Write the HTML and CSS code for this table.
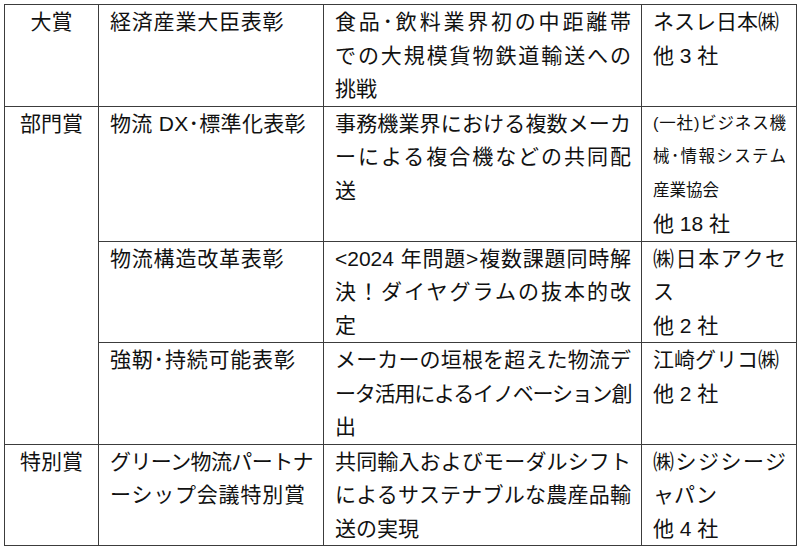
FILE: index.html
```html
<!DOCTYPE html>
<html lang="ja">
<head>
<meta charset="utf-8">
<title>表彰一覧</title>
<link rel="stylesheet" href="styles.css">
</head>
<body>
<table class="awards">
  <colgroup>
    <col class="c1">
    <col class="c2">
    <col class="c3">
    <col class="c4">
  </colgroup>
  <tbody>
    <tr>
      <td class="cat">大賞</td>
      <td class="name">経済産業大臣表彰</td>
      <td class="desc">
        <span class="ln j">食品･飲料業界初の中距離帯</span>
        <span class="ln j">での大規模貨物鉄道輸送への</span>
        <span class="ln">挑戦</span>
      </td>
      <td class="co">
        <span class="ln">ネスレ日本㈱</span>
        <span class="ln">他 3 社</span>
      </td>
    </tr>
    <tr>
      <td class="cat" rowspan="3">部門賞</td>
      <td class="name"><span class="tight">物流 DX･標準化表彰</span></td>
      <td class="desc">
        <span class="ln j">事務機業界における複数メーカ</span>
        <span class="ln j">ーによる複合機などの共同配</span>
        <span class="ln">送</span>
      </td>
      <td class="co">
        <span class="ln j small">(一社)ビジネス機</span>
        <span class="ln j small">械･情報システム</span>
        <span class="ln small">産業協会</span>
        <span class="ln">他 18 社</span>
      </td>
    </tr>
    <tr>
      <td class="name">物流構造改革表彰</td>
      <td class="desc">
        <span class="ln j">&lt;2024 年問題&gt;複数課題同時解</span>
        <span class="ln j">決！ダイヤグラムの抜本的改</span>
        <span class="ln">定</span>
      </td>
      <td class="co">
        <span class="ln j">㈱日本アクセ</span>
        <span class="ln">ス</span>
        <span class="ln">他 2 社</span>
      </td>
    </tr>
    <tr>
      <td class="name">強靭･持続可能表彰</td>
      <td class="desc">
        <span class="ln j">メーカーの垣根を超えた物流デ</span>
        <span class="ln j squeeze">ータ活用によるイノベーション創</span>
        <span class="ln">出</span>
      </td>
      <td class="co">
        <span class="ln">江崎グリコ㈱</span>
        <span class="ln">他 2 社</span>
      </td>
    </tr>
    <tr>
      <td class="cat">特別賞</td>
      <td class="name">
        <span class="ln narrow">グリーン物流パートナ</span>
        <span class="ln">ーシップ会議特別賞</span>
      </td>
      <td class="desc">
        <span class="ln j">共同輸入およびモーダルシフト</span>
        <span class="ln j">によるサステナブルな農産品輸</span>
        <span class="ln">送の実現</span>
      </td>
      <td class="co">
        <span class="ln j">㈱シジシージ</span>
        <span class="ln">ャパン</span>
        <span class="ln">他 4 社</span>
      </td>
    </tr>
  </tbody>
</table>
</body>
</html>
```

FILE: styles.css
```css
html, body {
  margin: 0;
  padding: 0;
  background: #ffffff;
}

body {
  padding: 4px 0 0 4px;
  font-family: "Liberation Sans", "Noto Sans CJK JP", sans-serif;
  font-size: 21px;
  line-height: 33.5px;
  color: #111111;
}

.awards {
  border-collapse: collapse;
  table-layout: fixed;
  width: 792px;
}

.c1 { width: 94px; }
.c2 { width: 225px; }
.c3 { width: 318px; }
.c4 { width: 155px; }

.awards td {
  border: 1px solid #3c3c3c;
  padding: 0 10px 0 11px;
  vertical-align: top;
}

.awards td.cat {
  text-align: center;
  padding: 0;
}

.awards td.name {
  letter-spacing: 0.8px;
}

.ln {
  display: block;
  white-space: nowrap;
}

.ln.j {
  text-align: justify;
  text-align-last: justify;
  white-space: normal;
}

.tight {
  letter-spacing: 0.3px;
}

.name .ln.narrow {
  letter-spacing: -0.6px;
}

.squeeze {
  letter-spacing: -1.4px;
}

.small {
  font-size: 16.5px;
}
```
